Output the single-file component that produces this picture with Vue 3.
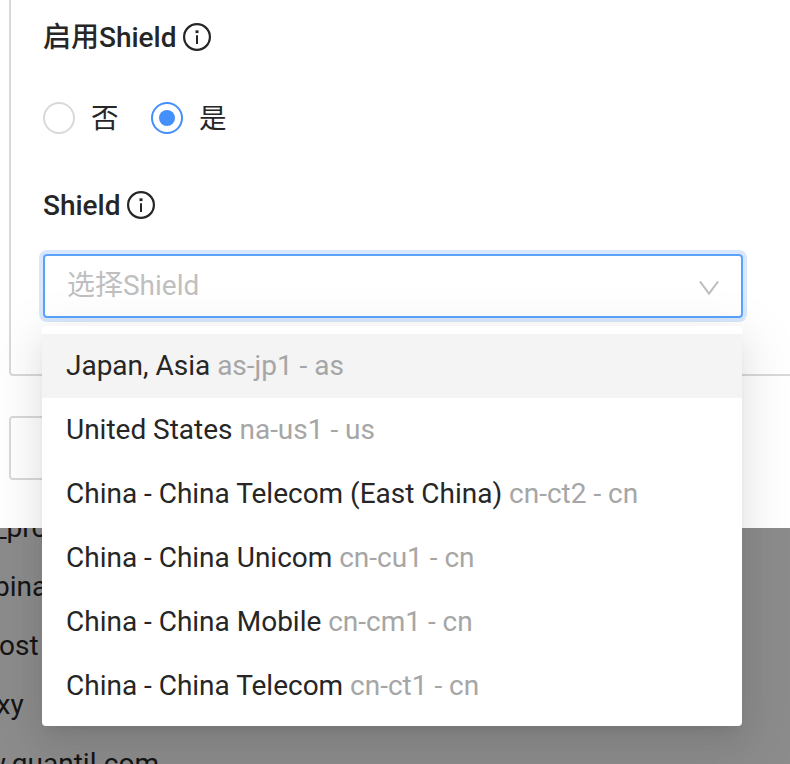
<script setup>
const options = [
  { name: 'Japan, Asia', code: 'as-jp1 - as' },
  { name: 'United States', code: 'na-us1 - us' },
  { name: 'China - China Telecom (East China)', code: 'cn-ct2 - cn' },
  { name: 'China - China Unicom', code: 'cn-cu1 - cn' },
  { name: 'China - China Mobile', code: 'cn-cm1 - cn' },
  { name: 'China - China Telecom', code: 'cn-ct1 - cn' },
]
const rows = [
  { text: '_proxy', shift: -6 },
  { text: 'bina', shift: -6 },
  { text: 'ost', shift: -1 },
  { text: 'xy', shift: -3.5 },
  { text: 'w.quantil.com', shift: -15 },
]
</script>

<template>
  <div class="page">
    <section class="modal">
      <div class="panel">
        <div class="label">
          <span>启用Shield</span>
          <svg class="info" viewBox="0 0 28 28"><circle cx="14" cy="14" r="12.9" /><path d="M14 12.2V21" /><path class="dot" d="M12.5 7.3h3v2.8h-3z" /></svg>
        </div>
        <div class="radios">
          <label class="radio"><i class="ring"></i><span>否</span></label>
          <label class="radio"><i class="ring on"></i><span>是</span></label>
        </div>
        <div class="label second">
          <span>Shield</span>
          <svg class="info" viewBox="0 0 28 28"><circle cx="14" cy="14" r="12.9" /><path d="M14 12.2V21" /><path class="dot" d="M12.5 7.3h3v2.8h-3z" /></svg>
        </div>
        <div class="select">
          <span class="placeholder">选择Shield</span>
          <svg class="arrow" viewBox="0 0 20 14"><path d="M.9.4 10 12.7 19.1.4" /></svg>
          <ul class="menu">
            <li v-for="(o, i) in options" :key="o.code" :class="{ active: i === 0 }">
              {{ o.name }} <span class="code">{{ o.code }}</span>
            </li>
          </ul>
        </div>
      </div>
      <div class="button"></div>
    </section>
    <section class="behind">
      <div v-for="r in rows" :key="r.text" class="row" :style="{ textIndent: r.shift + 'px' }">{{ r.text }}</div>
    </section>
  </div>
</template>

<style>
body {
  margin: 0;
  overflow: hidden;
}
</style>

<style scoped>
.page {
  width: 790px;
  height: 764px;
  overflow: hidden;
  background: #8c8c8c;
  color: #262626;
  font: 28px/44px Roboto, "Noto Sans CJK SC", sans-serif;
  letter-spacing: -0.01px;
}
.page * {
  box-sizing: border-box;
}
.modal {
  height: 528px;
  padding-left: 9px;
  background: #fff;
}
.panel {
  height: 376px;
  padding: 15px 0 0 32px;
  border: solid #d9d9d9;
  border-width: 0 0 2px 2px;
  border-radius: 0 0 0 4px;
}
.label {
  display: flex;
  align-items: center;
  gap: 6.6px;
  height: 44px;
  font-weight: 500;
}
.label span {
  padding-top: 2px;
}
.info {
  width: 28px;
  height: 28px;
  fill: none;
  stroke: #262626;
  stroke-width: 2.2;
}
.info path {
  stroke-width: 2;
}
.info .dot {
  fill: #262626;
  stroke: none;
}
.radios {
  display: flex;
  gap: 32px;
  height: 64px;
  margin-top: 27px;
}
.radio {
  display: flex;
  align-items: center;
  gap: 16px;
}
.radio span {
  width: 28px;
  padding-top: 1px;
  font-size: 27.5px;
}
.ring {
  display: flex;
  align-items: center;
  justify-content: center;
  width: 32px;
  height: 32px;
  border: 2px solid #d9d9d9;
  border-radius: 50%;
}
.ring.on {
  border-color: #438ffc;
}
.ring.on::after {
  width: 16px;
  height: 16px;
  border-radius: 50%;
  background: #438ffc;
  content: "";
}
.second {
  margin-top: 33px;
}
.select {
  position: relative;
  display: flex;
  align-items: center;
  justify-content: space-between;
  width: 700px;
  height: 64px;
  margin-top: 27px;
  padding: 0 22px;
  border: 2px solid #5ba3fa;
  border-radius: 4px;
  box-shadow: 0 0 0 4px #d9e7fd;
  color: #bfbfbf;
}
.arrow {
  width: 20px;
  height: 14px;
  margin-top: 3px;
  fill: none;
  stroke: #bfbfbf;
  stroke-width: 2;
}
.menu {
  position: absolute;
  top: 70px;
  left: -3px;
  width: 700px;
  height: 400px;
  margin: 0;
  padding: 8px 0;
  border-radius: 4px;
  background: #fff;
  box-shadow: 0 6px 12px -8px rgba(0, 0, 0, 0.12), 0 12px 32px rgba(0, 0, 0, 0.08), 0 18px 56px 16px rgba(0, 0, 0, 0.05);
  color: #262626;
  list-style: none;
}
.menu li {
  height: 64px;
  padding: 10px 24px;
  white-space: nowrap;
}
.menu .active {
  background: #f4f4f4;
}
.code {
  color: #a6a6a6;
}
.button {
  width: 200px;
  height: 64px;
  margin-top: 40px;
  border: 2px solid #d9d9d9;
  border-radius: 4px;
}
.behind {
  height: 236px;
  overflow: hidden;
  color: #151515;
}
.row {
  height: 59px;
  line-height: 59px;
  white-space: nowrap;
}
.row:first-child {
  margin-top: -30px;
}
</style>
